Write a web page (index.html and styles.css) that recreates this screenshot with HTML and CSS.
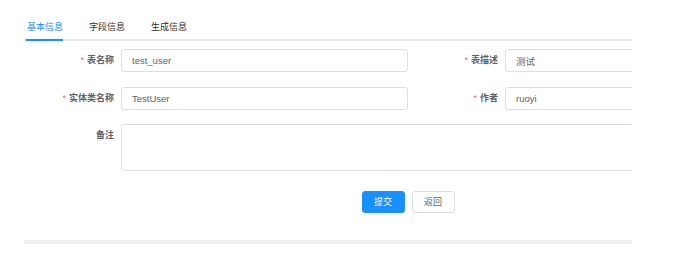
FILE: index.html
```html
<!DOCTYPE html>
<html lang="zh-CN">
<head>
  <meta charset="UTF-8">
  <title>修改生成配置</title>
  <link rel="stylesheet" href="styles.css">
</head>
<body>

  <div class="page">
    <div class="card">
      <div class="tabs">
        <div class="tab active">基本信息</div>
        <div class="tab">字段信息</div>
        <div class="tab">生成信息</div>
      </div>

      <form class="form">
        <div class="row">
          <div class="item">
            <label class="label required">表名称</label>
            <div class="control"><input class="input" value="test_user"></div>
          </div>
          <div class="item">
            <label class="label required">表描述</label>
            <div class="control"><input class="input" value="测试"></div>
          </div>
        </div>

        <div class="row">
          <div class="item">
            <label class="label required">实体类名称</label>
            <div class="control"><input class="input" value="TestUser"></div>
          </div>
          <div class="item">
            <label class="label required">作者</label>
            <div class="control"><input class="input" value="ruoyi"></div>
          </div>
        </div>

        <div class="row full">
          <div class="item top">
            <label class="label">备注</label>
            <div class="control"><textarea class="textarea"></textarea></div>
          </div>
        </div>

        <div class="actions">
          <button type="button" class="btn btn-primary">提交</button>
          <button type="button" class="btn">返回</button>
        </div>
      </form>
    </div>

    <div class="footer-bar"></div>
  </div>

</body>
</html>
```

FILE: styles.css
```css
body {
  margin: 0;
  background: #fff;
  font-family: "Liberation Sans", "Noto Sans CJK SC", sans-serif;
  color: #606266;
}

.page {
  padding-top: 14px;
  margin-left: 24px;
  width: 608px;
}

.card {
  overflow: hidden;
}

/* tabs */
.tabs {
  display: flex;
  padding-left: 3px;
  border-bottom: 2px solid #e6e9ef;
}

.tab {
  height: 25px;
  line-height: 27px;
  padding: 0 13px;
  font-size: 9px;
  color: #303133;
  position: relative;
}

.tab:first-child {
  padding-left: 0;
}

.tab.active {
  color: #1890ff;
}

.tab.active::after {
  content: "";
  position: absolute;
  left: -1px;
  right: 13px;
  bottom: -2px;
  height: 2px;
  background: #1890ff;
}

/* form */
.form {
  width: 768px;
  margin-top: 8px;
}

.row {
  display: grid;
  grid-template-columns: 384px 384px;
  margin-bottom: 14.5px;
}

.row.full {
  grid-template-columns: 768px;
}

.item {
  display: flex;
  align-items: center;
}

.item.top {
  align-items: flex-start;
}

.label {
  width: 97px;
  box-sizing: border-box;
  padding-right: 7px;
  text-align: right;
  font-size: 9px;
  font-weight: 700;
  line-height: 23px;
  color: #606266;
}

.label.required::before {
  content: "*";
  color: #f56c6c;
  margin-right: 3px;
  font-weight: 400;
}

.control {
  flex: 1;
}

.input,
.textarea {
  display: block;
  width: 100%;
  box-sizing: border-box;
  border: 1px solid #dcdfe6;
  border-radius: 3px;
  font-family: inherit;
  font-size: 9.5px;
  color: #606266;
  background: #fff;
  outline: none;
}

.input {
  height: 23px;
  padding: 0 10px;
}

.textarea {
  height: 47px;
  resize: none;
  padding: 4px 10px;
}

/* buttons */
.actions {
  display: flex;
  justify-content: center;
  gap: 7px;
  padding-top: 5px;
}

.btn {
  width: 43px;
  height: 22px;
  padding: 0;
  border: 1px solid #dcdfe6;
  border-radius: 3px;
  background: #fff;
  color: #606266;
  font-family: inherit;
  font-size: 9px;
  cursor: pointer;
}

.btn-primary {
  background: #1890ff;
  border-color: #1890ff;
  color: #fff;
}

.footer-bar {
  margin-top: 27px;
  height: 4px;
  background: #eeeeee;
}
```
